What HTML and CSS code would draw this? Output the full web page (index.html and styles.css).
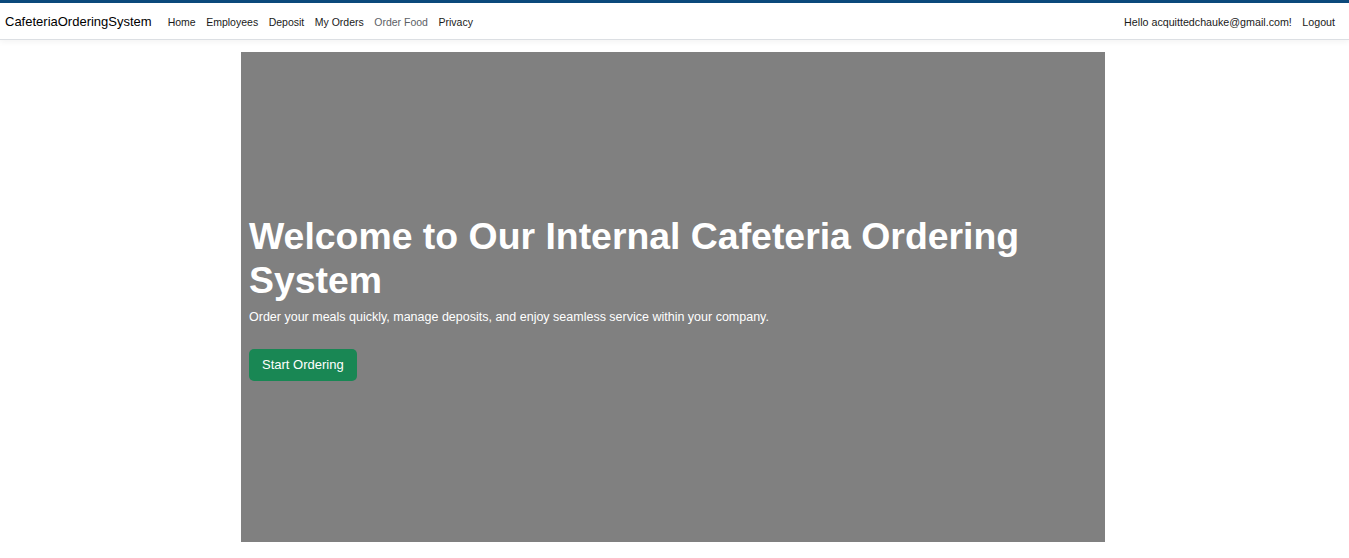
FILE: index.html
```html
<!DOCTYPE html>
<html lang="en">
<head>
<meta charset="utf-8">
<title>CafeteriaOrderingSystem</title>
<link rel="stylesheet" href="styles.css">
</head>
<body>
<div class="topline"></div>
<header class="navbar">
  <div class="nav-left">
    <a class="brand" href="#">CafeteriaOrderingSystem</a>
    <nav class="links">
      <a href="#">Home</a>
      <a href="#">Employees</a>
      <a href="#">Deposit</a>
      <a href="#">My Orders</a>
      <a href="#" class="muted">Order Food</a>
      <a href="#">Privacy</a>
    </nav>
  </div>
  <div class="nav-right">
    <a href="#">Hello acquittedchauke@gmail.com!</a>
    <a href="#">Logout</a>
  </div>
</header>
<main class="hero">
  <div class="hero-inner">
    <h1>Welcome to Our Internal Cafeteria Ordering System</h1>
    <p>Order your meals quickly, manage deposits, and enjoy seamless service within your company.</p>
    <a class="btn" href="#">Start Ordering</a>
  </div>
</main>
</body>
</html>
```
FILE: styles.css
```css
html, body {
  margin: 0;
  padding: 0;
  background: #fff;
  font-family: "Liberation Sans", Arial, sans-serif;
  color: #212529;
}
a { text-decoration: none; color: inherit; }
.topline {
  height: 3px;
  background: #0c4a7c;
}
.navbar {
  height: 35px;
  display: flex;
  align-items: center;
  justify-content: space-between;
  padding: 1px 14px 0 5px;
  border-bottom: 1px solid #dcdfe3;
  box-shadow: 0 2px 6px rgba(0,0,0,0.05);
}
.nav-left, .nav-right {
  display: flex;
  align-items: center;
}
.brand {
  font-size: 13px;
  color: #000;
  margin-right: 16px;
}
.links {
  display: flex;
  gap: 10.5px;
  font-size: 10.5px;
  color: #1a1a1a;
}
.links .muted { color: #5c6166; }
.nav-right {
  gap: 10.5px;
  font-size: 10.7px;
  color: #1a1a1a;
}
.hero {
  width: 864px;
  height: 490px;
  margin: 12px 0 0 calc(50% - 433.5px);
  background: #808080;
  display: flex;
  align-items: center;
  color: #fff;
}
.hero-inner {
  padding: 0 8px;
}
.hero h1 {
  margin: 0 0 6px;
  font-size: 37.4px;
  line-height: 44px;
  font-weight: bold;
}
.hero p {
  margin: 0 0 23px;
  font-size: 12.5px;
  line-height: 18px;
}
.btn {
  display: inline-block;
  background: #198754;
  color: #fff;
  font-size: 13px;
  line-height: 20px;
  padding: 6px 13px;
  border-radius: 5px;
}
```
